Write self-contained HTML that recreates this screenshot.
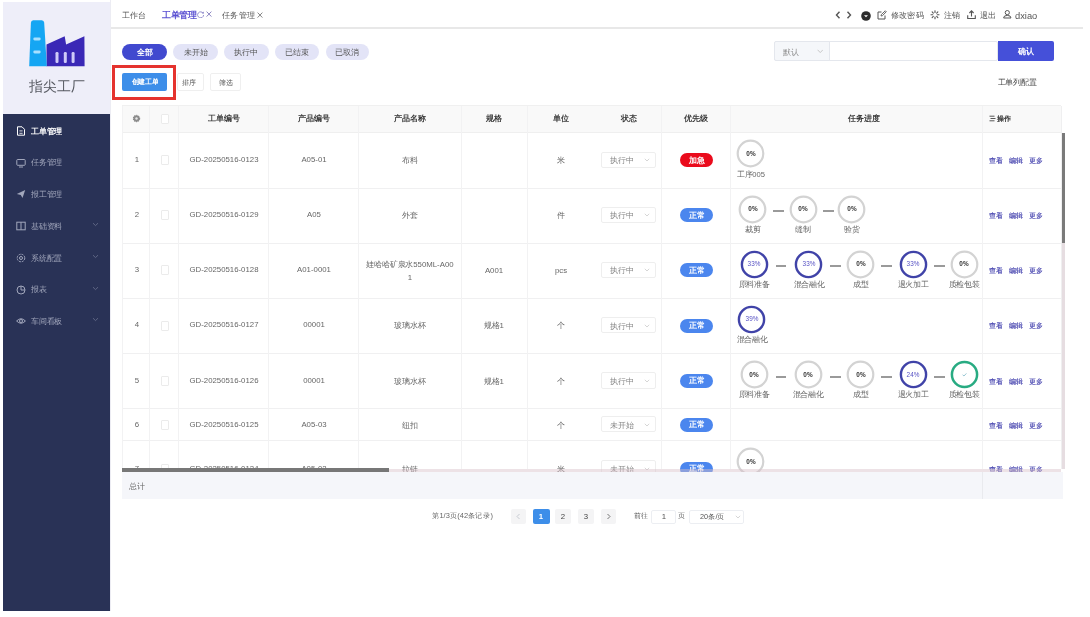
<!DOCTYPE html>
<html><head><meta charset="utf-8"><style>
html,body{margin:0;padding:0;}
body{width:1090px;height:617px;overflow:hidden;position:relative;background:#fff;font-family:"Liberation Sans",sans-serif;}
.t,.b,svg{position:absolute;}
.t{white-space:nowrap;}
</style></head><body>

<div id="wrap" style="position:absolute;left:0;top:0;width:1090px;height:617px;filter:blur(0.3px);">
<div class="b" style="left:3.0px;top:2.0px;width:107.0px;height:112.0px;background:#eeeef9;"></div>
<div class="b" style="left:110.0px;top:0.0px;width:1.0px;height:610.5px;background:#ececf3;"></div>
<div class="b" style="left:3.0px;top:114.0px;width:107.0px;height:496.5px;background:#293256;"></div>
<svg style="left:0;top:0" width="110" height="110" viewBox="0 0 110 110">
<path d="M46.5 44.5 L64.7 36.2 L66.1 44.5 L84.4 36.2 L84.6 66.3 L46.5 66.3 Z" fill="#3a28b6"/>
<path d="M33.2 20.3 H41.8 Q44 20.3 44.2 22.8 L46.8 66.3 H29.2 L30.9 22.8 Q31.1 20.3 33.2 20.3 Z" fill="#15a6f3"/>
<rect x="33.3" y="37.6" width="7.4" height="2.8" rx="1.4" fill="#a8e0ff"/>
<rect x="33.3" y="50.6" width="7.4" height="2.8" rx="1.4" fill="#a8e0ff"/>
<rect x="55.5" y="52" width="3" height="11" rx="1.2" fill="#cfcaf8"/>
<rect x="63.8" y="52" width="3" height="11" rx="1.2" fill="#cfcaf8"/>
<rect x="71.6" y="52" width="3" height="11" rx="1.2" fill="#cfcaf8"/>
</svg>
<div class="t" style="left:-43.5px;top:76.0px;width:200px;text-align:center;font-size:15px;line-height:19.5px;color:#575a62;font-weight:normal;transform:scale(0.9400);transform-origin:50% 50%;">指尖工厂</div>
<div class="t" style="left:31.0px;top:126.6px;white-space:nowrap;font-size:8px;line-height:10.4px;color:#ffffff;font-weight:bold;transform:scale(0.9750);transform-origin:0 50%;">工单管理</div>
<svg style="left:16px;top:126px" width="10" height="10" viewBox="0 0 10 10"><path d="M1.5 0.8 H6 L8.5 3.3 V9.2 H1.5 Z" fill="none" stroke="#ffffff" stroke-width="1"/><path d="M3.4 4.9 H6.6 M3.4 7.3 H6.6" stroke="#ffffff" stroke-width="0.8"/></svg>
<div class="t" style="left:31.0px;top:158.1px;white-space:nowrap;font-size:8px;line-height:10.4px;color:#a2a7bc;font-weight:normal;transform:scale(0.9750);transform-origin:0 50%;">任务管理</div>
<svg style="left:16px;top:157.5px" width="10" height="10" viewBox="0 0 10 10"><rect x="0.8" y="1.5" width="8.4" height="5.8" rx="0.8" fill="none" stroke="#a2a7bc" stroke-width="1"/><path d="M3 9 H7" stroke="#a2a7bc" stroke-width="1"/></svg>
<div class="t" style="left:31.0px;top:189.8px;white-space:nowrap;font-size:8px;line-height:10.4px;color:#a2a7bc;font-weight:normal;transform:scale(0.9750);transform-origin:0 50%;">报工管理</div>
<svg style="left:16px;top:189.2px" width="10" height="10" viewBox="0 0 10 10"><path d="M0.8 5 L9.2 1 L6.5 9 L4.8 6 Z" fill="#a2a7bc"/></svg>
<div class="t" style="left:31.0px;top:221.8px;white-space:nowrap;font-size:8px;line-height:10.4px;color:#a2a7bc;font-weight:normal;transform:scale(0.9750);transform-origin:0 50%;">基础资料</div>
<svg style="left:16px;top:221.2px" width="10" height="10" viewBox="0 0 10 10"><rect x="0.8" y="1.2" width="8.4" height="7.6" fill="none" stroke="#a2a7bc" stroke-width="1"/><path d="M5 1.2 V8.8" stroke="#a2a7bc" stroke-width="1"/></svg>
<svg style="left:92px;top:222.2px" width="7" height="5" viewBox="0 0 7 5"><path d="M1 1.2 L3.5 3.6 L6 1.2" fill="none" stroke="#6d7391" stroke-width="0.8"/></svg>
<div class="t" style="left:31.0px;top:253.6px;white-space:nowrap;font-size:8px;line-height:10.4px;color:#a2a7bc;font-weight:normal;transform:scale(0.9750);transform-origin:0 50%;">系统配置</div>
<svg style="left:16px;top:253px" width="10" height="10" viewBox="0 0 10 10"><circle cx="5" cy="5" r="3.8" fill="none" stroke="#a2a7bc" stroke-width="1" stroke-dasharray="2 1"/><circle cx="5" cy="5" r="1.5" fill="none" stroke="#a2a7bc" stroke-width="1"/></svg>
<svg style="left:92px;top:254px" width="7" height="5" viewBox="0 0 7 5"><path d="M1 1.2 L3.5 3.6 L6 1.2" fill="none" stroke="#6d7391" stroke-width="0.8"/></svg>
<div class="t" style="left:31.0px;top:285.4px;white-space:nowrap;font-size:8px;line-height:10.4px;color:#a2a7bc;font-weight:normal;transform:scale(0.9750);transform-origin:0 50%;">报表</div>
<svg style="left:16px;top:284.8px" width="10" height="10" viewBox="0 0 10 10"><circle cx="5" cy="5" r="4" fill="none" stroke="#a2a7bc" stroke-width="1"/><path d="M5 1 V5 H9" fill="none" stroke="#a2a7bc" stroke-width="1"/></svg>
<svg style="left:92px;top:285.8px" width="7" height="5" viewBox="0 0 7 5"><path d="M1 1.2 L3.5 3.6 L6 1.2" fill="none" stroke="#6d7391" stroke-width="0.8"/></svg>
<div class="t" style="left:31.0px;top:316.9px;white-space:nowrap;font-size:8px;line-height:10.4px;color:#a2a7bc;font-weight:normal;transform:scale(0.9750);transform-origin:0 50%;">车间看板</div>
<svg style="left:16px;top:316.3px" width="10" height="10" viewBox="0 0 10 10"><path d="M0.6 5 Q5 0.5 9.4 5 Q5 9.5 0.6 5 Z" fill="none" stroke="#a2a7bc" stroke-width="1"/><circle cx="5" cy="5" r="1.5" fill="none" stroke="#a2a7bc" stroke-width="1"/></svg>
<svg style="left:92px;top:317.3px" width="7" height="5" viewBox="0 0 7 5"><path d="M1 1.2 L3.5 3.6 L6 1.2" fill="none" stroke="#6d7391" stroke-width="0.8"/></svg>
<div class="b" style="left:111.0px;top:27.2px;width:972.0px;height:2.0px;background:#e8e8e8;"></div>
<div class="t" style="left:122.0px;top:10.2px;white-space:nowrap;font-size:9px;line-height:11.7px;color:#555;font-weight:normal;transform:scale(0.9111);transform-origin:0 50%;">工作台</div>
<div class="t" style="left:162.0px;top:9.8px;white-space:nowrap;font-size:9px;line-height:11.7px;color:#5a50d2;font-weight:bold;transform:scale(0.9667);transform-origin:0 50%;">工单管理</div>
<svg style="left:196.8px;top:10.8px" width="7.4" height="7.4" viewBox="0 0 7.4 7.4"><path d="M6.1 2.2 A3 3 0 1 0 6.6 4" fill="none" stroke="#8a84c8" stroke-width="0.9"/><path d="M4.9 1.8 L6.4 2.4 L6.6 0.8" fill="none" stroke="#8a84c8" stroke-width="0.8"/></svg>
<svg style="left:205.6px;top:11.4px" width="6" height="6.2" viewBox="0 0 6 6.2"><path d="M0.6 0.6 L5.4 5.6 M5.4 0.6 L0.6 5.6" stroke="#7d76ba" stroke-width="0.9"/></svg>
<div class="t" style="left:222.0px;top:9.6px;white-space:nowrap;font-size:9px;line-height:11.7px;color:#555;font-weight:normal;transform:scale(0.9333);transform-origin:0 50%;">任务管理</div>
<svg style="left:257px;top:11.6px" width="6" height="6.2" viewBox="0 0 6 6.2"><path d="M0.6 0.6 L5.4 5.6 M5.4 0.6 L0.6 5.6" stroke="#777" stroke-width="0.9"/></svg>
<svg style="left:834px;top:10px" width="20" height="10" viewBox="0 0 20 10"><path d="M5.5 1.8 L2.5 5 L5.5 8.2 M13.5 1.8 L16.5 5 L13.5 8.2" fill="none" stroke="#555" stroke-width="1.4"/></svg>
<svg style="left:861.4px;top:10.5px" width="10" height="10" viewBox="0 0 10 10"><circle cx="5" cy="5" r="4.8" fill="#2b2b2b"/><path d="M3 4.2 L5 6.2 L7 4.2 Z" fill="#fff"/></svg>
<svg style="left:876.8px;top:9.8px" width="10" height="10" viewBox="0 0 10 10"><path d="M8 5.5 V9 H1 V2 H4.5" fill="none" stroke="#555" stroke-width="1"/><path d="M4 6 L4.3 4.6 L8.3 0.8 L9.3 1.8 L5.4 5.7 Z" fill="none" stroke="#555" stroke-width="0.9"/></svg>
<div class="t" style="left:890.5px;top:10.3px;white-space:nowrap;font-size:9px;line-height:11.7px;color:#555;font-weight:normal;transform:scale(0.9111);transform-origin:0 50%;">修改密码</div>
<svg style="left:930px;top:10px" width="10" height="9.5" viewBox="0 0 10 10"><g stroke="#555" stroke-width="1.2" stroke-linecap="round"><path d="M5 0.8 V2.6"/><path d="M5 7.4 V9.2"/><path d="M0.8 5 H2.6"/><path d="M7.4 5 H9.2"/><path d="M2 2 L3.2 3.2"/><path d="M6.8 6.8 L8 8"/><path d="M8 2 L6.8 3.2"/><path d="M3.2 6.8 L2 8"/></g></svg>
<div class="t" style="left:943.5px;top:10.3px;white-space:nowrap;font-size:9px;line-height:11.7px;color:#555;font-weight:normal;transform:scale(0.9111);transform-origin:0 50%;">注销</div>
<svg style="left:966.8px;top:10px" width="9" height="9.2" viewBox="0 0 9 9.2"><path d="M0.7 5.2 V8.5 H8.3 V5.2" fill="none" stroke="#555" stroke-width="1.1"/><path d="M4.5 6.5 V0.9 M2.4 3 L4.5 0.9 L6.6 3" fill="none" stroke="#555" stroke-width="1.1"/></svg>
<div class="t" style="left:979.5px;top:10.3px;white-space:nowrap;font-size:9px;line-height:11.7px;color:#555;font-weight:normal;transform:scale(0.9111);transform-origin:0 50%;">退出</div>
<svg style="left:1003px;top:10.2px" width="8.6" height="8.6" viewBox="0 0 8.6 8.6"><circle cx="4.3" cy="2.6" r="2.1" fill="none" stroke="#555" stroke-width="1"/><path d="M0.6 8 Q0.6 5.4 4.3 5.4 Q8 5.4 8 8 Z" fill="none" stroke="#555" stroke-width="1"/></svg>
<div class="t" style="left:1015.0px;top:8.5px;white-space:nowrap;font-size:10px;line-height:13.0px;color:#555;font-weight:normal;transform:scale(0.9300);transform-origin:0 50%;">dxiao</div>
<div class="b" style="left:122.4px;top:43.5px;width:44.6px;height:16.2px;background:#4149cf;border-radius:9px;"></div>
<div class="t" style="left:44.7px;top:47.7px;width:200px;text-align:center;font-size:8px;line-height:10.4px;color:#fff;font-weight:bold;transform:scale(0.9875);transform-origin:50% 50%;">全部</div>
<div class="b" style="left:173.2px;top:43.5px;width:44.6px;height:16.2px;background:#e3e4f7;border-radius:9px;"></div>
<div class="t" style="left:95.5px;top:47.7px;width:200px;text-align:center;font-size:8px;line-height:10.4px;color:#555;font-weight:normal;transform:scale(0.9875);transform-origin:50% 50%;">未开始</div>
<div class="b" style="left:224.0px;top:43.5px;width:44.5px;height:16.2px;background:#e3e4f7;border-radius:9px;"></div>
<div class="t" style="left:146.2px;top:47.7px;width:200px;text-align:center;font-size:8px;line-height:10.4px;color:#555;font-weight:normal;transform:scale(0.9875);transform-origin:50% 50%;">执行中</div>
<div class="b" style="left:274.7px;top:43.5px;width:44.6px;height:16.2px;background:#e3e4f7;border-radius:9px;"></div>
<div class="t" style="left:197.0px;top:47.7px;width:200px;text-align:center;font-size:8px;line-height:10.4px;color:#555;font-weight:normal;transform:scale(0.9875);transform-origin:50% 50%;">已结束</div>
<div class="b" style="left:325.5px;top:43.5px;width:43.5px;height:16.2px;background:#e3e4f7;border-radius:9px;"></div>
<div class="t" style="left:247.2px;top:47.7px;width:200px;text-align:center;font-size:8px;line-height:10.4px;color:#555;font-weight:normal;transform:scale(0.9875);transform-origin:50% 50%;">已取消</div>
<div class="b" style="left:774.0px;top:41.3px;width:223.5px;height:19.9px;background:#fff;border:1px solid #e4e7ed;box-sizing:border-box;border-radius:2px;"></div>
<div class="b" style="left:774.0px;top:41.3px;width:56.0px;height:19.9px;background:#f5f7fa;border:1px solid #e4e7ed;box-sizing:border-box;border-radius:2px 0 0 2px;"></div>
<div class="t" style="left:782.6px;top:47.6px;white-space:nowrap;font-size:8px;line-height:10.4px;color:#8f8f8f;font-weight:normal;transform:scale(0.9750);transform-origin:0 50%;">默认</div>
<svg style="left:816.8px;top:49px" width="6.5" height="4.5" viewBox="0 0 6.5 4.5"><path d="M0.6 0.8 L3.25 3.6 L5.9 0.8" fill="none" stroke="#c8c8c8" stroke-width="1"/></svg>
<div class="b" style="left:997.5px;top:41.2px;width:56.1px;height:20.2px;background:#4550d9;border-radius:0 2px 2px 0;"></div>
<div class="t" style="left:925.5px;top:47.1px;width:200px;text-align:center;font-size:8px;line-height:10.4px;color:#fff;font-weight:bold;transform-origin:50% 50%;">确认</div>
<div class="t" style="left:917.3px;top:77.6px;width:200px;text-align:center;font-size:8px;line-height:10.4px;color:#444;font-weight:normal;transform:scale(0.9750);transform-origin:50% 50%;">工单列配置</div>
<div class="b" style="left:112.0px;top:65.0px;width:64.0px;height:35.0px;border:3.5px solid #e5332e;box-sizing:border-box;"></div>
<div class="b" style="left:122.4px;top:73.1px;width:44.5px;height:17.5px;background:#3d8ee9;border-radius:2px;"></div>
<div class="t" style="left:44.6px;top:76.9px;width:200px;text-align:center;font-size:7px;line-height:9.1px;color:#fff;font-weight:bold;transform:scale(0.9286);transform-origin:50% 50%;">创建工单</div>
<div class="b" style="left:177.0px;top:73.1px;width:27.0px;height:17.5px;background:#fff;border:1px solid #efefef;box-sizing:border-box;border-radius:2px;"></div>
<div class="t" style="left:88.8px;top:78.0px;width:200px;text-align:center;font-size:7px;line-height:9.1px;color:#555;font-weight:normal;transform-origin:50% 50%;">排序</div>
<div class="b" style="left:210.3px;top:73.1px;width:31.0px;height:17.5px;background:#fff;border:1px solid #efefef;box-sizing:border-box;border-radius:2px;"></div>
<div class="t" style="left:125.6px;top:78.0px;width:200px;text-align:center;font-size:7px;line-height:9.1px;color:#555;font-weight:normal;transform-origin:50% 50%;">筛选</div>
<div class="b" style="left:122.0px;top:105.5px;width:939.0px;height:27.0px;background:#f9f9f9;"></div>
<div class="b" style="left:122.0px;top:187.5px;width:939.0px;height:1.0px;background:#f0f0f1;"></div>
<div class="b" style="left:122.0px;top:242.5px;width:939.0px;height:1.0px;background:#f0f0f1;"></div>
<div class="b" style="left:122.0px;top:297.5px;width:939.0px;height:1.0px;background:#f0f0f1;"></div>
<div class="b" style="left:122.0px;top:353.4px;width:939.0px;height:1.0px;background:#f0f0f1;"></div>
<div class="b" style="left:122.0px;top:408.4px;width:939.0px;height:1.0px;background:#f0f0f1;"></div>
<div class="b" style="left:122.0px;top:440.4px;width:939.0px;height:1.0px;background:#f0f0f1;"></div>
<div class="b" style="left:122.0px;top:132.0px;width:939.0px;height:1.0px;background:#efefef;"></div>
<div class="b" style="left:122.0px;top:105.0px;width:939.0px;height:1.0px;background:#f0f0f0;"></div>
<div class="b" style="left:121.5px;top:105.5px;width:1.0px;height:363.5px;background:#f2f2f3;"></div>
<div class="b" style="left:149.0px;top:105.5px;width:1.0px;height:363.5px;background:#f2f2f3;"></div>
<div class="b" style="left:177.5px;top:105.5px;width:1.0px;height:363.5px;background:#f2f2f3;"></div>
<div class="b" style="left:268.0px;top:105.5px;width:1.0px;height:363.5px;background:#f2f2f3;"></div>
<div class="b" style="left:357.7px;top:105.5px;width:1.0px;height:363.5px;background:#f2f2f3;"></div>
<div class="b" style="left:461.0px;top:105.5px;width:1.0px;height:363.5px;background:#f2f2f3;"></div>
<div class="b" style="left:526.5px;top:105.5px;width:1.0px;height:363.5px;background:#f2f2f3;"></div>
<div class="b" style="left:661.1px;top:105.5px;width:1.0px;height:363.5px;background:#f2f2f3;"></div>
<div class="b" style="left:729.8px;top:105.5px;width:1.0px;height:363.5px;background:#f2f2f3;"></div>
<div class="b" style="left:981.7px;top:105.5px;width:1.0px;height:363.5px;background:#f2f2f3;"></div>
<div class="b" style="left:1060.5px;top:105.5px;width:1.0px;height:363.5px;background:#efeff0;"></div>
<svg style="left:132px;top:114.3px" width="9" height="9" viewBox="0 0 9 9"><circle cx="4.5" cy="4.5" r="3.1" fill="#8c8c8c" stroke="#8c8c8c" stroke-width="1.2" stroke-dasharray="1.2 0.8"/><circle cx="4.5" cy="4.5" r="1.2" fill="#e8e8e8"/></svg>
<div class="b" style="left:161.0px;top:113.8px;width:8.0px;height:10.0px;border:0.8px solid #ebebeb;box-sizing:border-box;border-radius:1px;background:#fff;"></div>
<div class="t" style="left:123.5px;top:113.6px;width:200px;text-align:center;font-size:8px;line-height:10.4px;color:#3a3a3a;font-weight:bold;transform:scale(0.9750);transform-origin:50% 50%;">工单编号</div>
<div class="t" style="left:213.7px;top:113.6px;width:200px;text-align:center;font-size:8px;line-height:10.4px;color:#3a3a3a;font-weight:bold;transform:scale(0.9750);transform-origin:50% 50%;">产品编号</div>
<div class="t" style="left:309.5px;top:113.6px;width:200px;text-align:center;font-size:8px;line-height:10.4px;color:#3a3a3a;font-weight:bold;transform:scale(0.9750);transform-origin:50% 50%;">产品名称</div>
<div class="t" style="left:394.0px;top:113.6px;width:200px;text-align:center;font-size:8px;line-height:10.4px;color:#3a3a3a;font-weight:bold;transform:scale(0.9750);transform-origin:50% 50%;">规格</div>
<div class="t" style="left:461.3px;top:113.6px;width:200px;text-align:center;font-size:8px;line-height:10.4px;color:#3a3a3a;font-weight:bold;transform:scale(0.9750);transform-origin:50% 50%;">单位</div>
<div class="t" style="left:528.7px;top:113.6px;width:200px;text-align:center;font-size:8px;line-height:10.4px;color:#3a3a3a;font-weight:bold;transform:scale(0.9750);transform-origin:50% 50%;">状态</div>
<div class="t" style="left:596.2px;top:113.6px;width:200px;text-align:center;font-size:8px;line-height:10.4px;color:#3a3a3a;font-weight:bold;transform:scale(0.9750);transform-origin:50% 50%;">优先级</div>
<div class="t" style="left:764.3px;top:113.6px;width:200px;text-align:center;font-size:8px;line-height:10.4px;color:#3a3a3a;font-weight:bold;transform:scale(0.9750);transform-origin:50% 50%;">任务进度</div>
<svg style="left:988.9px;top:115.3px" width="7" height="7" viewBox="0 0 7 7"><path d="M0.5 1.2 H5.5 M1.5 3.5 H6.5 M0.5 5.8 H5.5" stroke="#444" stroke-width="0.9"/></svg>
<div class="t" style="left:996.8px;top:113.6px;white-space:nowrap;font-size:8px;line-height:10.4px;color:#333;font-weight:bold;transform:scale(0.9250);transform-origin:0 50%;">操作</div>
<div class="b" style="left:0;top:133px;width:1090px;height:339px;overflow:hidden;">
<div class="t" style="left:36.6px;top:21.9px;width:200px;text-align:center;font-size:8px;line-height:10.4px;color:#666;font-weight:normal;transform:scale(0.9750);transform-origin:50% 50%;">1</div>
<div class="b" style="left:161.0px;top:22.1px;width:8.0px;height:10.0px;border:0.8px solid #ebebeb;box-sizing:border-box;border-radius:1px;background:#fff;"></div>
<div class="t" style="left:123.5px;top:21.9px;width:200px;text-align:center;font-size:8px;line-height:10.4px;color:#666;font-weight:normal;transform:scale(0.9750);transform-origin:50% 50%;">GD-20250516-0123</div>
<div class="t" style="left:213.7px;top:21.9px;width:200px;text-align:center;font-size:8px;line-height:10.4px;color:#666;font-weight:normal;transform:scale(0.9750);transform-origin:50% 50%;">A05-01</div>
<div class="t" style="left:309.5px;top:22.9px;width:200px;text-align:center;font-size:8px;line-height:10.4px;color:#666;font-weight:normal;transform:scale(0.9750);transform-origin:50% 50%;">布料</div>
<div class="t" style="left:394.0px;top:22.7px;width:200px;text-align:center;font-size:8px;line-height:10.4px;color:#666;font-weight:normal;transform:scale(0.9750);transform-origin:50% 50%;"></div>
<div class="t" style="left:461.3px;top:22.9px;width:200px;text-align:center;font-size:8px;line-height:10.4px;color:#666;font-weight:normal;transform:scale(0.9750);transform-origin:50% 50%;">米</div>
<div class="b" style="left:600.9px;top:18.5px;width:55.5px;height:16.2px;border:1px solid #eeeeee;box-sizing:border-box;border-radius:2px;background:#fff;"></div>
<div class="t" style="left:610.4px;top:23.1px;white-space:nowrap;font-size:8px;line-height:10.4px;color:#858585;font-weight:normal;transform:scale(0.9750);transform-origin:0 50%;">执行中</div>
<svg style="left:644px;top:25.099999999999994px" width="6" height="4" viewBox="0 0 6 4"><path d="M0.8 0.8 L3 3 L5.2 0.8" fill="none" stroke="#c4c4c4" stroke-width="0.7"/></svg>
<div class="b" style="left:679.7px;top:20.1px;width:33.5px;height:14.0px;background:#ea0b1c;border-radius:7px;"></div>
<div class="t" style="left:596.5px;top:22.5px;width:200px;text-align:center;font-size:8px;line-height:10.4px;color:#fff;font-weight:bold;transform:scale(0.9750);transform-origin:50% 50%;">加急</div>
<div class="t" style="left:989.0px;top:22.7px;white-space:nowrap;font-size:7px;line-height:9.1px;color:#5553b5;font-weight:normal;transform:scale(0.9571);transform-origin:0 50%;text-shadow:0.25px 0 0 #5553b5;">查看</div>
<div class="t" style="left:1009.0px;top:22.7px;white-space:nowrap;font-size:7px;line-height:9.1px;color:#5553b5;font-weight:normal;transform:scale(0.9571);transform-origin:0 50%;text-shadow:0.25px 0 0 #5553b5;">编辑</div>
<div class="t" style="left:1028.8px;top:22.7px;white-space:nowrap;font-size:7px;line-height:9.1px;color:#6361bb;font-weight:normal;transform:scale(0.9571);transform-origin:0 50%;text-shadow:0.25px 0 0 #6361bb;">更多</div>
<div class="t" style="left:36.6px;top:77.1px;width:200px;text-align:center;font-size:8px;line-height:10.4px;color:#666;font-weight:normal;transform:scale(0.9750);transform-origin:50% 50%;">2</div>
<div class="b" style="left:161.0px;top:77.3px;width:8.0px;height:10.0px;border:0.8px solid #ebebeb;box-sizing:border-box;border-radius:1px;background:#fff;"></div>
<div class="t" style="left:123.5px;top:77.1px;width:200px;text-align:center;font-size:8px;line-height:10.4px;color:#666;font-weight:normal;transform:scale(0.9750);transform-origin:50% 50%;">GD-20250516-0129</div>
<div class="t" style="left:213.7px;top:77.1px;width:200px;text-align:center;font-size:8px;line-height:10.4px;color:#666;font-weight:normal;transform:scale(0.9750);transform-origin:50% 50%;">A05</div>
<div class="t" style="left:309.5px;top:78.1px;width:200px;text-align:center;font-size:8px;line-height:10.4px;color:#666;font-weight:normal;transform:scale(0.9750);transform-origin:50% 50%;">外套</div>
<div class="t" style="left:394.0px;top:77.9px;width:200px;text-align:center;font-size:8px;line-height:10.4px;color:#666;font-weight:normal;transform:scale(0.9750);transform-origin:50% 50%;"></div>
<div class="t" style="left:461.3px;top:78.1px;width:200px;text-align:center;font-size:8px;line-height:10.4px;color:#666;font-weight:normal;transform:scale(0.9750);transform-origin:50% 50%;">件</div>
<div class="b" style="left:600.9px;top:73.7px;width:55.5px;height:16.2px;border:1px solid #eeeeee;box-sizing:border-box;border-radius:2px;background:#fff;"></div>
<div class="t" style="left:610.4px;top:78.3px;white-space:nowrap;font-size:8px;line-height:10.4px;color:#858585;font-weight:normal;transform:scale(0.9750);transform-origin:0 50%;">执行中</div>
<svg style="left:644px;top:80.30000000000001px" width="6" height="4" viewBox="0 0 6 4"><path d="M0.8 0.8 L3 3 L5.2 0.8" fill="none" stroke="#c4c4c4" stroke-width="0.7"/></svg>
<div class="b" style="left:679.7px;top:75.3px;width:33.5px;height:14.0px;background:#4b86ee;border-radius:7px;"></div>
<div class="t" style="left:596.5px;top:77.7px;width:200px;text-align:center;font-size:8px;line-height:10.4px;color:#fff;font-weight:bold;transform:scale(0.9750);transform-origin:50% 50%;">正常</div>
<div class="t" style="left:989.0px;top:78.0px;white-space:nowrap;font-size:7px;line-height:9.1px;color:#5553b5;font-weight:normal;transform:scale(0.9571);transform-origin:0 50%;text-shadow:0.25px 0 0 #5553b5;">查看</div>
<div class="t" style="left:1009.0px;top:78.0px;white-space:nowrap;font-size:7px;line-height:9.1px;color:#5553b5;font-weight:normal;transform:scale(0.9571);transform-origin:0 50%;text-shadow:0.25px 0 0 #5553b5;">编辑</div>
<div class="t" style="left:1028.8px;top:78.0px;white-space:nowrap;font-size:7px;line-height:9.1px;color:#6361bb;font-weight:normal;transform:scale(0.9571);transform-origin:0 50%;text-shadow:0.25px 0 0 #6361bb;">更多</div>
<div class="t" style="left:36.6px;top:132.2px;width:200px;text-align:center;font-size:8px;line-height:10.4px;color:#666;font-weight:normal;transform:scale(0.9750);transform-origin:50% 50%;">3</div>
<div class="b" style="left:161.0px;top:132.4px;width:8.0px;height:10.0px;border:0.8px solid #ebebeb;box-sizing:border-box;border-radius:1px;background:#fff;"></div>
<div class="t" style="left:123.5px;top:132.2px;width:200px;text-align:center;font-size:8px;line-height:10.4px;color:#666;font-weight:normal;transform:scale(0.9750);transform-origin:50% 50%;">GD-20250516-0128</div>
<div class="t" style="left:213.7px;top:132.2px;width:200px;text-align:center;font-size:8px;line-height:10.4px;color:#666;font-weight:normal;transform:scale(0.9750);transform-origin:50% 50%;">A01-0001</div>
<div class="t" style="left:309.5px;top:125.4px;width:200px;text-align:center;font-size:8px;line-height:13.0px;color:#666;font-weight:normal;transform:scale(0.9750);transform-origin:50% 50%;">娃哈哈矿泉水550ML-A00<br>1</div>
<div class="t" style="left:394.0px;top:133.0px;width:200px;text-align:center;font-size:8px;line-height:10.4px;color:#666;font-weight:normal;transform:scale(0.9750);transform-origin:50% 50%;">A001</div>
<div class="t" style="left:461.3px;top:133.2px;width:200px;text-align:center;font-size:8px;line-height:10.4px;color:#666;font-weight:normal;transform:scale(0.9750);transform-origin:50% 50%;">pcs</div>
<div class="b" style="left:600.9px;top:128.8px;width:55.5px;height:16.2px;border:1px solid #eeeeee;box-sizing:border-box;border-radius:2px;background:#fff;"></div>
<div class="t" style="left:610.4px;top:133.4px;white-space:nowrap;font-size:8px;line-height:10.4px;color:#858585;font-weight:normal;transform:scale(0.9750);transform-origin:0 50%;">执行中</div>
<svg style="left:644px;top:135.39999999999998px" width="6" height="4" viewBox="0 0 6 4"><path d="M0.8 0.8 L3 3 L5.2 0.8" fill="none" stroke="#c4c4c4" stroke-width="0.7"/></svg>
<div class="b" style="left:679.7px;top:130.4px;width:33.5px;height:14.0px;background:#4b86ee;border-radius:7px;"></div>
<div class="t" style="left:596.5px;top:132.8px;width:200px;text-align:center;font-size:8px;line-height:10.4px;color:#fff;font-weight:bold;transform:scale(0.9750);transform-origin:50% 50%;">正常</div>
<div class="t" style="left:989.0px;top:133.0px;white-space:nowrap;font-size:7px;line-height:9.1px;color:#5553b5;font-weight:normal;transform:scale(0.9571);transform-origin:0 50%;text-shadow:0.25px 0 0 #5553b5;">查看</div>
<div class="t" style="left:1009.0px;top:133.0px;white-space:nowrap;font-size:7px;line-height:9.1px;color:#5553b5;font-weight:normal;transform:scale(0.9571);transform-origin:0 50%;text-shadow:0.25px 0 0 #5553b5;">编辑</div>
<div class="t" style="left:1028.8px;top:133.0px;white-space:nowrap;font-size:7px;line-height:9.1px;color:#6361bb;font-weight:normal;transform:scale(0.9571);transform-origin:0 50%;text-shadow:0.25px 0 0 #6361bb;">更多</div>
<div class="t" style="left:36.6px;top:187.3px;width:200px;text-align:center;font-size:8px;line-height:10.4px;color:#666;font-weight:normal;transform:scale(0.9750);transform-origin:50% 50%;">4</div>
<div class="b" style="left:161.0px;top:187.5px;width:8.0px;height:10.0px;border:0.8px solid #ebebeb;box-sizing:border-box;border-radius:1px;background:#fff;"></div>
<div class="t" style="left:123.5px;top:187.3px;width:200px;text-align:center;font-size:8px;line-height:10.4px;color:#666;font-weight:normal;transform:scale(0.9750);transform-origin:50% 50%;">GD-20250516-0127</div>
<div class="t" style="left:213.7px;top:187.3px;width:200px;text-align:center;font-size:8px;line-height:10.4px;color:#666;font-weight:normal;transform:scale(0.9750);transform-origin:50% 50%;">00001</div>
<div class="t" style="left:309.5px;top:188.3px;width:200px;text-align:center;font-size:8px;line-height:10.4px;color:#666;font-weight:normal;transform:scale(0.9750);transform-origin:50% 50%;">玻璃水杯</div>
<div class="t" style="left:394.0px;top:188.1px;width:200px;text-align:center;font-size:8px;line-height:10.4px;color:#666;font-weight:normal;transform:scale(0.9750);transform-origin:50% 50%;">规格1</div>
<div class="t" style="left:461.3px;top:188.3px;width:200px;text-align:center;font-size:8px;line-height:10.4px;color:#666;font-weight:normal;transform:scale(0.9750);transform-origin:50% 50%;">个</div>
<div class="b" style="left:600.9px;top:183.9px;width:55.5px;height:16.2px;border:1px solid #eeeeee;box-sizing:border-box;border-radius:2px;background:#fff;"></div>
<div class="t" style="left:610.4px;top:188.5px;white-space:nowrap;font-size:8px;line-height:10.4px;color:#858585;font-weight:normal;transform:scale(0.9750);transform-origin:0 50%;">执行中</div>
<svg style="left:644px;top:190.5px" width="6" height="4" viewBox="0 0 6 4"><path d="M0.8 0.8 L3 3 L5.2 0.8" fill="none" stroke="#c4c4c4" stroke-width="0.7"/></svg>
<div class="b" style="left:679.7px;top:185.5px;width:33.5px;height:14.0px;background:#4b86ee;border-radius:7px;"></div>
<div class="t" style="left:596.5px;top:187.9px;width:200px;text-align:center;font-size:8px;line-height:10.4px;color:#fff;font-weight:bold;transform:scale(0.9750);transform-origin:50% 50%;">正常</div>
<div class="t" style="left:989.0px;top:188.1px;white-space:nowrap;font-size:7px;line-height:9.1px;color:#5553b5;font-weight:normal;transform:scale(0.9571);transform-origin:0 50%;text-shadow:0.25px 0 0 #5553b5;">查看</div>
<div class="t" style="left:1009.0px;top:188.1px;white-space:nowrap;font-size:7px;line-height:9.1px;color:#5553b5;font-weight:normal;transform:scale(0.9571);transform-origin:0 50%;text-shadow:0.25px 0 0 #5553b5;">编辑</div>
<div class="t" style="left:1028.8px;top:188.1px;white-space:nowrap;font-size:7px;line-height:9.1px;color:#6361bb;font-weight:normal;transform:scale(0.9571);transform-origin:0 50%;text-shadow:0.25px 0 0 #6361bb;">更多</div>
<div class="t" style="left:36.6px;top:242.8px;width:200px;text-align:center;font-size:8px;line-height:10.4px;color:#666;font-weight:normal;transform:scale(0.9750);transform-origin:50% 50%;">5</div>
<div class="b" style="left:161.0px;top:243.0px;width:8.0px;height:10.0px;border:0.8px solid #ebebeb;box-sizing:border-box;border-radius:1px;background:#fff;"></div>
<div class="t" style="left:123.5px;top:242.8px;width:200px;text-align:center;font-size:8px;line-height:10.4px;color:#666;font-weight:normal;transform:scale(0.9750);transform-origin:50% 50%;">GD-20250516-0126</div>
<div class="t" style="left:213.7px;top:242.8px;width:200px;text-align:center;font-size:8px;line-height:10.4px;color:#666;font-weight:normal;transform:scale(0.9750);transform-origin:50% 50%;">00001</div>
<div class="t" style="left:309.5px;top:243.8px;width:200px;text-align:center;font-size:8px;line-height:10.4px;color:#666;font-weight:normal;transform:scale(0.9750);transform-origin:50% 50%;">玻璃水杯</div>
<div class="t" style="left:394.0px;top:243.6px;width:200px;text-align:center;font-size:8px;line-height:10.4px;color:#666;font-weight:normal;transform:scale(0.9750);transform-origin:50% 50%;">规格1</div>
<div class="t" style="left:461.3px;top:243.8px;width:200px;text-align:center;font-size:8px;line-height:10.4px;color:#666;font-weight:normal;transform:scale(0.9750);transform-origin:50% 50%;">个</div>
<div class="b" style="left:600.9px;top:239.4px;width:55.5px;height:16.2px;border:1px solid #eeeeee;box-sizing:border-box;border-radius:2px;background:#fff;"></div>
<div class="t" style="left:610.4px;top:244.0px;white-space:nowrap;font-size:8px;line-height:10.4px;color:#858585;font-weight:normal;transform:scale(0.9750);transform-origin:0 50%;">执行中</div>
<svg style="left:644px;top:246px" width="6" height="4" viewBox="0 0 6 4"><path d="M0.8 0.8 L3 3 L5.2 0.8" fill="none" stroke="#c4c4c4" stroke-width="0.7"/></svg>
<div class="b" style="left:679.7px;top:241.0px;width:33.5px;height:14.0px;background:#4b86ee;border-radius:7px;"></div>
<div class="t" style="left:596.5px;top:243.4px;width:200px;text-align:center;font-size:8px;line-height:10.4px;color:#fff;font-weight:bold;transform:scale(0.9750);transform-origin:50% 50%;">正常</div>
<div class="t" style="left:989.0px;top:243.6px;white-space:nowrap;font-size:7px;line-height:9.1px;color:#5553b5;font-weight:normal;transform:scale(0.9571);transform-origin:0 50%;text-shadow:0.25px 0 0 #5553b5;">查看</div>
<div class="t" style="left:1009.0px;top:243.6px;white-space:nowrap;font-size:7px;line-height:9.1px;color:#5553b5;font-weight:normal;transform:scale(0.9571);transform-origin:0 50%;text-shadow:0.25px 0 0 #5553b5;">编辑</div>
<div class="t" style="left:1028.8px;top:243.6px;white-space:nowrap;font-size:7px;line-height:9.1px;color:#6361bb;font-weight:normal;transform:scale(0.9571);transform-origin:0 50%;text-shadow:0.25px 0 0 #6361bb;">更多</div>
<div class="t" style="left:36.6px;top:286.7px;width:200px;text-align:center;font-size:8px;line-height:10.4px;color:#666;font-weight:normal;transform:scale(0.9750);transform-origin:50% 50%;">6</div>
<div class="b" style="left:161.0px;top:286.9px;width:8.0px;height:10.0px;border:0.8px solid #ebebeb;box-sizing:border-box;border-radius:1px;background:#fff;"></div>
<div class="t" style="left:123.5px;top:286.7px;width:200px;text-align:center;font-size:8px;line-height:10.4px;color:#666;font-weight:normal;transform:scale(0.9750);transform-origin:50% 50%;">GD-20250516-0125</div>
<div class="t" style="left:213.7px;top:286.7px;width:200px;text-align:center;font-size:8px;line-height:10.4px;color:#666;font-weight:normal;transform:scale(0.9750);transform-origin:50% 50%;">A05-03</div>
<div class="t" style="left:309.5px;top:287.7px;width:200px;text-align:center;font-size:8px;line-height:10.4px;color:#666;font-weight:normal;transform:scale(0.9750);transform-origin:50% 50%;">纽扣</div>
<div class="t" style="left:394.0px;top:287.5px;width:200px;text-align:center;font-size:8px;line-height:10.4px;color:#666;font-weight:normal;transform:scale(0.9750);transform-origin:50% 50%;"></div>
<div class="t" style="left:461.3px;top:287.7px;width:200px;text-align:center;font-size:8px;line-height:10.4px;color:#666;font-weight:normal;transform:scale(0.9750);transform-origin:50% 50%;">个</div>
<div class="b" style="left:600.9px;top:283.3px;width:55.5px;height:16.2px;border:1px solid #eeeeee;box-sizing:border-box;border-radius:2px;background:#fff;"></div>
<div class="t" style="left:610.4px;top:287.9px;white-space:nowrap;font-size:8px;line-height:10.4px;color:#858585;font-weight:normal;transform:scale(0.9750);transform-origin:0 50%;">未开始</div>
<svg style="left:644px;top:289.9px" width="6" height="4" viewBox="0 0 6 4"><path d="M0.8 0.8 L3 3 L5.2 0.8" fill="none" stroke="#c4c4c4" stroke-width="0.7"/></svg>
<div class="b" style="left:679.7px;top:284.9px;width:33.5px;height:14.0px;background:#4b86ee;border-radius:7px;"></div>
<div class="t" style="left:596.5px;top:287.3px;width:200px;text-align:center;font-size:8px;line-height:10.4px;color:#fff;font-weight:bold;transform:scale(0.9750);transform-origin:50% 50%;">正常</div>
<div class="t" style="left:989.0px;top:287.5px;white-space:nowrap;font-size:7px;line-height:9.1px;color:#5553b5;font-weight:normal;transform:scale(0.9571);transform-origin:0 50%;text-shadow:0.25px 0 0 #5553b5;">查看</div>
<div class="t" style="left:1009.0px;top:287.5px;white-space:nowrap;font-size:7px;line-height:9.1px;color:#5553b5;font-weight:normal;transform:scale(0.9571);transform-origin:0 50%;text-shadow:0.25px 0 0 #5553b5;">编辑</div>
<div class="t" style="left:1028.8px;top:287.5px;white-space:nowrap;font-size:7px;line-height:9.1px;color:#6361bb;font-weight:normal;transform:scale(0.9571);transform-origin:0 50%;text-shadow:0.25px 0 0 #6361bb;">更多</div>
<div class="t" style="left:36.6px;top:330.8px;width:200px;text-align:center;font-size:8px;line-height:10.4px;color:#666;font-weight:normal;transform:scale(0.9750);transform-origin:50% 50%;">7</div>
<div class="b" style="left:161.0px;top:331.0px;width:8.0px;height:10.0px;border:0.8px solid #ebebeb;box-sizing:border-box;border-radius:1px;background:#fff;"></div>
<div class="t" style="left:123.5px;top:330.8px;width:200px;text-align:center;font-size:8px;line-height:10.4px;color:#666;font-weight:normal;transform:scale(0.9750);transform-origin:50% 50%;">GD-20250516-0124</div>
<div class="t" style="left:213.7px;top:330.8px;width:200px;text-align:center;font-size:8px;line-height:10.4px;color:#666;font-weight:normal;transform:scale(0.9750);transform-origin:50% 50%;">A05-02</div>
<div class="t" style="left:309.5px;top:331.8px;width:200px;text-align:center;font-size:8px;line-height:10.4px;color:#666;font-weight:normal;transform:scale(0.9750);transform-origin:50% 50%;">拉链</div>
<div class="t" style="left:394.0px;top:331.6px;width:200px;text-align:center;font-size:8px;line-height:10.4px;color:#666;font-weight:normal;transform:scale(0.9750);transform-origin:50% 50%;"></div>
<div class="t" style="left:461.3px;top:331.8px;width:200px;text-align:center;font-size:8px;line-height:10.4px;color:#666;font-weight:normal;transform:scale(0.9750);transform-origin:50% 50%;">米</div>
<div class="b" style="left:600.9px;top:327.4px;width:55.5px;height:16.2px;border:1px solid #eeeeee;box-sizing:border-box;border-radius:2px;background:#fff;"></div>
<div class="t" style="left:610.4px;top:332.0px;white-space:nowrap;font-size:8px;line-height:10.4px;color:#858585;font-weight:normal;transform:scale(0.9750);transform-origin:0 50%;">未开始</div>
<svg style="left:644px;top:334px" width="6" height="4" viewBox="0 0 6 4"><path d="M0.8 0.8 L3 3 L5.2 0.8" fill="none" stroke="#c4c4c4" stroke-width="0.7"/></svg>
<div class="b" style="left:679.7px;top:329.0px;width:33.5px;height:14.0px;background:#4b86ee;border-radius:7px;"></div>
<div class="t" style="left:596.5px;top:331.4px;width:200px;text-align:center;font-size:8px;line-height:10.4px;color:#fff;font-weight:bold;transform:scale(0.9750);transform-origin:50% 50%;">正常</div>
<div class="t" style="left:989.0px;top:331.6px;white-space:nowrap;font-size:7px;line-height:9.1px;color:#5553b5;font-weight:normal;transform:scale(0.9571);transform-origin:0 50%;text-shadow:0.25px 0 0 #5553b5;">查看</div>
<div class="t" style="left:1009.0px;top:331.6px;white-space:nowrap;font-size:7px;line-height:9.1px;color:#5553b5;font-weight:normal;transform:scale(0.9571);transform-origin:0 50%;text-shadow:0.25px 0 0 #5553b5;">编辑</div>
<div class="t" style="left:1028.8px;top:331.6px;white-space:nowrap;font-size:7px;line-height:9.1px;color:#6361bb;font-weight:normal;transform:scale(0.9571);transform-origin:0 50%;text-shadow:0.25px 0 0 #6361bb;">更多</div>
<svg style="left:736.3px;top:6.300000000000011px" width="29" height="29" viewBox="0 0 29 29"><circle cx="14.5" cy="14.5" r="12.8" fill="#fff" stroke="#d3d3d3" stroke-width="2.2"/></svg>
<div class="t" style="left:650.8px;top:16.0px;width:200px;text-align:center;font-size:7px;line-height:9.1px;color:#333;font-weight:bold;transform:scale(0.9143);transform-origin:50% 50%;">0%</div>
<div class="t" style="left:650.8px;top:36.5px;width:200px;text-align:center;font-size:8px;line-height:10.4px;color:#666;font-weight:normal;transform:scale(0.9500);transform-origin:50% 50%;">工序005</div>
<svg style="left:738.0px;top:61.5px" width="29" height="29" viewBox="0 0 29 29"><circle cx="14.5" cy="14.5" r="12.8" fill="#fff" stroke="#d3d3d3" stroke-width="2.2"/></svg>
<div class="t" style="left:652.5px;top:71.2px;width:200px;text-align:center;font-size:7px;line-height:9.1px;color:#333;font-weight:bold;transform:scale(0.9143);transform-origin:50% 50%;">0%</div>
<div class="t" style="left:652.5px;top:91.7px;width:200px;text-align:center;font-size:8px;line-height:10.4px;color:#666;font-weight:normal;transform:scale(0.9500);transform-origin:50% 50%;">裁剪</div>
<svg style="left:788.7px;top:61.5px" width="29" height="29" viewBox="0 0 29 29"><circle cx="14.5" cy="14.5" r="12.8" fill="#fff" stroke="#d3d3d3" stroke-width="2.2"/></svg>
<div class="t" style="left:703.2px;top:71.2px;width:200px;text-align:center;font-size:7px;line-height:9.1px;color:#333;font-weight:bold;transform:scale(0.9143);transform-origin:50% 50%;">0%</div>
<div class="t" style="left:703.2px;top:91.7px;width:200px;text-align:center;font-size:8px;line-height:10.4px;color:#666;font-weight:normal;transform:scale(0.9500);transform-origin:50% 50%;">缝制</div>
<svg style="left:837.2px;top:61.5px" width="29" height="29" viewBox="0 0 29 29"><circle cx="14.5" cy="14.5" r="12.8" fill="#fff" stroke="#d3d3d3" stroke-width="2.2"/></svg>
<div class="t" style="left:751.7px;top:71.2px;width:200px;text-align:center;font-size:7px;line-height:9.1px;color:#333;font-weight:bold;transform:scale(0.9143);transform-origin:50% 50%;">0%</div>
<div class="t" style="left:751.7px;top:91.7px;width:200px;text-align:center;font-size:8px;line-height:10.4px;color:#666;font-weight:normal;transform:scale(0.9500);transform-origin:50% 50%;">验货</div>
<div class="b" style="left:772.6px;top:76.9px;width:11.0px;height:1.8px;background:#9a9a9a;"></div>
<div class="b" style="left:822.8px;top:76.9px;width:11.1px;height:1.8px;background:#9a9a9a;"></div>
<svg style="left:739.5px;top:116.5px" width="29" height="29" viewBox="0 0 29 29"><circle cx="14.5" cy="14.5" r="12.6" fill="#fff" stroke="#4043a8" stroke-width="2.4"/></svg>
<div class="t" style="left:654.0px;top:126.1px;width:200px;text-align:center;font-size:7px;line-height:9.1px;color:#5752c4;font-weight:normal;transform:scale(0.9143);transform-origin:50% 50%;">33%</div>
<div class="t" style="left:654.0px;top:146.7px;width:200px;text-align:center;font-size:8px;line-height:10.4px;color:#666;font-weight:normal;transform:scale(0.9500);transform-origin:50% 50%;">原料准备</div>
<svg style="left:794.0px;top:116.5px" width="29" height="29" viewBox="0 0 29 29"><circle cx="14.5" cy="14.5" r="12.6" fill="#fff" stroke="#4043a8" stroke-width="2.4"/></svg>
<div class="t" style="left:708.5px;top:126.1px;width:200px;text-align:center;font-size:7px;line-height:9.1px;color:#5752c4;font-weight:normal;transform:scale(0.9143);transform-origin:50% 50%;">33%</div>
<div class="t" style="left:708.5px;top:146.7px;width:200px;text-align:center;font-size:8px;line-height:10.4px;color:#666;font-weight:normal;transform:scale(0.9500);transform-origin:50% 50%;">混合融化</div>
<svg style="left:846.3px;top:116.5px" width="29" height="29" viewBox="0 0 29 29"><circle cx="14.5" cy="14.5" r="12.8" fill="#fff" stroke="#d3d3d3" stroke-width="2.2"/></svg>
<div class="t" style="left:760.8px;top:126.1px;width:200px;text-align:center;font-size:7px;line-height:9.1px;color:#333;font-weight:bold;transform:scale(0.9143);transform-origin:50% 50%;">0%</div>
<div class="t" style="left:760.8px;top:146.7px;width:200px;text-align:center;font-size:8px;line-height:10.4px;color:#666;font-weight:normal;transform:scale(0.9500);transform-origin:50% 50%;">成型</div>
<svg style="left:898.5px;top:116.5px" width="29" height="29" viewBox="0 0 29 29"><circle cx="14.5" cy="14.5" r="12.6" fill="#fff" stroke="#4043a8" stroke-width="2.4"/></svg>
<div class="t" style="left:813.0px;top:126.1px;width:200px;text-align:center;font-size:7px;line-height:9.1px;color:#5752c4;font-weight:normal;transform:scale(0.9143);transform-origin:50% 50%;">33%</div>
<div class="t" style="left:813.0px;top:146.7px;width:200px;text-align:center;font-size:8px;line-height:10.4px;color:#666;font-weight:normal;transform:scale(0.9500);transform-origin:50% 50%;">退火加工</div>
<svg style="left:949.7px;top:116.5px" width="29" height="29" viewBox="0 0 29 29"><circle cx="14.5" cy="14.5" r="12.8" fill="#fff" stroke="#d3d3d3" stroke-width="2.2"/></svg>
<div class="t" style="left:864.2px;top:126.1px;width:200px;text-align:center;font-size:7px;line-height:9.1px;color:#333;font-weight:bold;transform:scale(0.9143);transform-origin:50% 50%;">0%</div>
<div class="t" style="left:864.2px;top:146.7px;width:200px;text-align:center;font-size:8px;line-height:10.4px;color:#666;font-weight:normal;transform:scale(0.9500);transform-origin:50% 50%;">质检包装</div>
<div class="b" style="left:776.1px;top:132.2px;width:10.3px;height:1.8px;background:#9a9a9a;"></div>
<div class="b" style="left:829.8px;top:132.2px;width:11.0px;height:1.8px;background:#9a9a9a;"></div>
<div class="b" style="left:880.7px;top:132.2px;width:11.0px;height:1.8px;background:#9a9a9a;"></div>
<div class="b" style="left:934.4px;top:132.2px;width:11.0px;height:1.8px;background:#9a9a9a;"></div>
<svg style="left:737.0px;top:171.7px" width="29" height="29" viewBox="0 0 29 29"><circle cx="14.5" cy="14.5" r="12.6" fill="#fff" stroke="#4043a8" stroke-width="2.4"/></svg>
<div class="t" style="left:651.5px;top:181.3px;width:200px;text-align:center;font-size:7px;line-height:9.1px;color:#5752c4;font-weight:normal;transform:scale(0.9143);transform-origin:50% 50%;">39%</div>
<div class="t" style="left:651.5px;top:201.9px;width:200px;text-align:center;font-size:8px;line-height:10.4px;color:#666;font-weight:normal;transform:scale(0.9500);transform-origin:50% 50%;">混合融化</div>
<svg style="left:739.7px;top:227.2px" width="29" height="29" viewBox="0 0 29 29"><circle cx="14.5" cy="14.5" r="12.8" fill="#fff" stroke="#d3d3d3" stroke-width="2.2"/></svg>
<div class="t" style="left:654.2px;top:236.8px;width:200px;text-align:center;font-size:7px;line-height:9.1px;color:#333;font-weight:bold;transform:scale(0.9143);transform-origin:50% 50%;">0%</div>
<div class="t" style="left:654.2px;top:257.4px;width:200px;text-align:center;font-size:8px;line-height:10.4px;color:#666;font-weight:normal;transform:scale(0.9500);transform-origin:50% 50%;">原料准备</div>
<svg style="left:793.8px;top:227.2px" width="29" height="29" viewBox="0 0 29 29"><circle cx="14.5" cy="14.5" r="12.8" fill="#fff" stroke="#d3d3d3" stroke-width="2.2"/></svg>
<div class="t" style="left:708.3px;top:236.8px;width:200px;text-align:center;font-size:7px;line-height:9.1px;color:#333;font-weight:bold;transform:scale(0.9143);transform-origin:50% 50%;">0%</div>
<div class="t" style="left:708.3px;top:257.4px;width:200px;text-align:center;font-size:8px;line-height:10.4px;color:#666;font-weight:normal;transform:scale(0.9500);transform-origin:50% 50%;">混合融化</div>
<svg style="left:846.0px;top:227.2px" width="29" height="29" viewBox="0 0 29 29"><circle cx="14.5" cy="14.5" r="12.8" fill="#fff" stroke="#d3d3d3" stroke-width="2.2"/></svg>
<div class="t" style="left:760.5px;top:236.8px;width:200px;text-align:center;font-size:7px;line-height:9.1px;color:#333;font-weight:bold;transform:scale(0.9143);transform-origin:50% 50%;">0%</div>
<div class="t" style="left:760.5px;top:257.4px;width:200px;text-align:center;font-size:8px;line-height:10.4px;color:#666;font-weight:normal;transform:scale(0.9500);transform-origin:50% 50%;">成型</div>
<svg style="left:898.5px;top:227.2px" width="29" height="29" viewBox="0 0 29 29"><circle cx="14.5" cy="14.5" r="12.6" fill="#fff" stroke="#4043a8" stroke-width="2.4"/></svg>
<div class="t" style="left:813.0px;top:236.8px;width:200px;text-align:center;font-size:7px;line-height:9.1px;color:#5752c4;font-weight:normal;transform:scale(0.9143);transform-origin:50% 50%;">24%</div>
<div class="t" style="left:813.0px;top:257.4px;width:200px;text-align:center;font-size:8px;line-height:10.4px;color:#666;font-weight:normal;transform:scale(0.9500);transform-origin:50% 50%;">退火加工</div>
<svg style="left:949.7px;top:227.2px" width="29" height="29" viewBox="0 0 29 29"><circle cx="14.5" cy="14.5" r="12.6" fill="#fff" stroke="#28ab82" stroke-width="2.5"/><path d="M12.6 14.8 L14 16 L16.4 13.4" fill="none" stroke="#7fb9c9" stroke-width="0.8"/></svg>
<div class="t" style="left:864.2px;top:257.4px;width:200px;text-align:center;font-size:8px;line-height:10.4px;color:#666;font-weight:normal;transform:scale(0.9500);transform-origin:50% 50%;">质检包装</div>
<div class="b" style="left:776.1px;top:242.9px;width:10.3px;height:1.8px;background:#9a9a9a;"></div>
<div class="b" style="left:829.8px;top:242.9px;width:11.0px;height:1.8px;background:#9a9a9a;"></div>
<div class="b" style="left:880.7px;top:242.9px;width:11.0px;height:1.8px;background:#9a9a9a;"></div>
<div class="b" style="left:934.4px;top:242.9px;width:11.0px;height:1.8px;background:#9a9a9a;"></div>
<svg style="left:736.0px;top:314.0px" width="29" height="29" viewBox="0 0 29 29"><circle cx="14.5" cy="14.5" r="12.8" fill="#fff" stroke="#d3d3d3" stroke-width="2.2"/></svg>
<div class="t" style="left:650.5px;top:323.6px;width:200px;text-align:center;font-size:7px;line-height:9.1px;color:#333;font-weight:bold;transform:scale(0.9143);transform-origin:50% 50%;">0%</div>
</div>
<div class="b" style="left:122.0px;top:468.6px;width:939.0px;height:3.7px;background:rgba(215,190,200,0.45);"></div>
<div class="b" style="left:122.0px;top:468.4px;width:267.4px;height:3.9px;background:#777;"></div>
<div class="b" style="left:1061.6px;top:132.5px;width:3.4px;height:336.0px;background:#e6dde1;"></div>
<div class="b" style="left:1061.6px;top:132.5px;width:3.4px;height:110.0px;background:#7a7a7a;"></div>
<div class="b" style="left:122.0px;top:472.3px;width:941.0px;height:26.7px;background:#f5f6fa;"></div>
<div class="b" style="left:981.5px;top:472.3px;width:1.0px;height:26.7px;background:#e9eaee;"></div>
<div class="t" style="left:129.0px;top:482.0px;white-space:nowrap;font-size:8px;line-height:10.4px;color:#666;font-weight:normal;transform:scale(0.9750);transform-origin:0 50%;">总计</div>
<div class="t" style="left:431.6px;top:511.3px;white-space:nowrap;font-size:8px;line-height:10.4px;color:#666;font-weight:normal;transform:scale(0.9313);transform-origin:0 50%;">第1/3页(42条记录)</div>
<div class="b" style="left:510.8px;top:509.0px;width:14.9px;height:15.0px;background:#f4f4f5;border-radius:2px;"></div>
<svg style="left:515px;top:513.0px" width="7" height="7" viewBox="0 0 7 7"><path d="M4.5 1 L2 3.5 L4.5 6" fill="none" stroke="#c0c4cc" stroke-width="0.9"/></svg>
<div class="b" style="left:533.1px;top:509.0px;width:16.5px;height:15.0px;background:#3d8ee9;border-radius:2px;"></div>
<div class="t" style="left:441.3px;top:512.1px;width:200px;text-align:center;font-size:8px;line-height:10.4px;color:#fff;font-weight:bold;transform:scale(0.9750);transform-origin:50% 50%;">1</div>
<div class="b" style="left:555.4px;top:509.0px;width:15.6px;height:15.0px;background:#f4f4f5;border-radius:2px;"></div>
<div class="t" style="left:463.2px;top:512.1px;width:200px;text-align:center;font-size:8px;line-height:10.4px;color:#444;font-weight:normal;transform:scale(0.9750);transform-origin:50% 50%;">2</div>
<div class="b" style="left:577.7px;top:509.0px;width:16.5px;height:15.0px;background:#f4f4f5;border-radius:2px;"></div>
<div class="t" style="left:486.0px;top:512.1px;width:200px;text-align:center;font-size:8px;line-height:10.4px;color:#444;font-weight:normal;transform:scale(0.9750);transform-origin:50% 50%;">3</div>
<div class="b" style="left:600.7px;top:509.0px;width:14.9px;height:15.0px;background:#f4f4f5;border-radius:2px;"></div>
<svg style="left:604.5px;top:513.0px" width="7" height="7" viewBox="0 0 7 7"><path d="M2.5 1 L5 3.5 L2.5 6" fill="none" stroke="#666" stroke-width="0.9"/></svg>
<div class="t" style="left:633.8px;top:511.3px;white-space:nowrap;font-size:8px;line-height:10.4px;color:#666;font-weight:normal;transform:scale(0.9125);transform-origin:0 50%;">前往</div>
<div class="b" style="left:651.1px;top:509.9px;width:24.8px;height:14.1px;border:1px solid #eceef2;box-sizing:border-box;border-radius:2px;"></div>
<div class="t" style="left:563.5px;top:512.1px;width:200px;text-align:center;font-size:8px;line-height:10.4px;color:#555;font-weight:normal;transform:scale(0.9750);transform-origin:50% 50%;">1</div>
<div class="t" style="left:678.3px;top:511.3px;white-space:nowrap;font-size:8px;line-height:10.4px;color:#666;font-weight:normal;transform:scale(0.9125);transform-origin:0 50%;">页</div>
<div class="b" style="left:689.0px;top:509.9px;width:55.4px;height:14.1px;border:1px solid #eceef2;box-sizing:border-box;border-radius:2px;"></div>
<div class="t" style="left:699.8px;top:511.9px;white-space:nowrap;font-size:8px;line-height:10.4px;color:#555;font-weight:normal;transform:scale(0.9125);transform-origin:0 50%;">20条/页</div>
<svg style="left:735px;top:514.5px" width="6" height="4" viewBox="0 0 6 4"><path d="M0.8 0.8 L3 3 L5.2 0.8" fill="none" stroke="#c4c4c4" stroke-width="0.7"/></svg>
</div>
</body></html>
